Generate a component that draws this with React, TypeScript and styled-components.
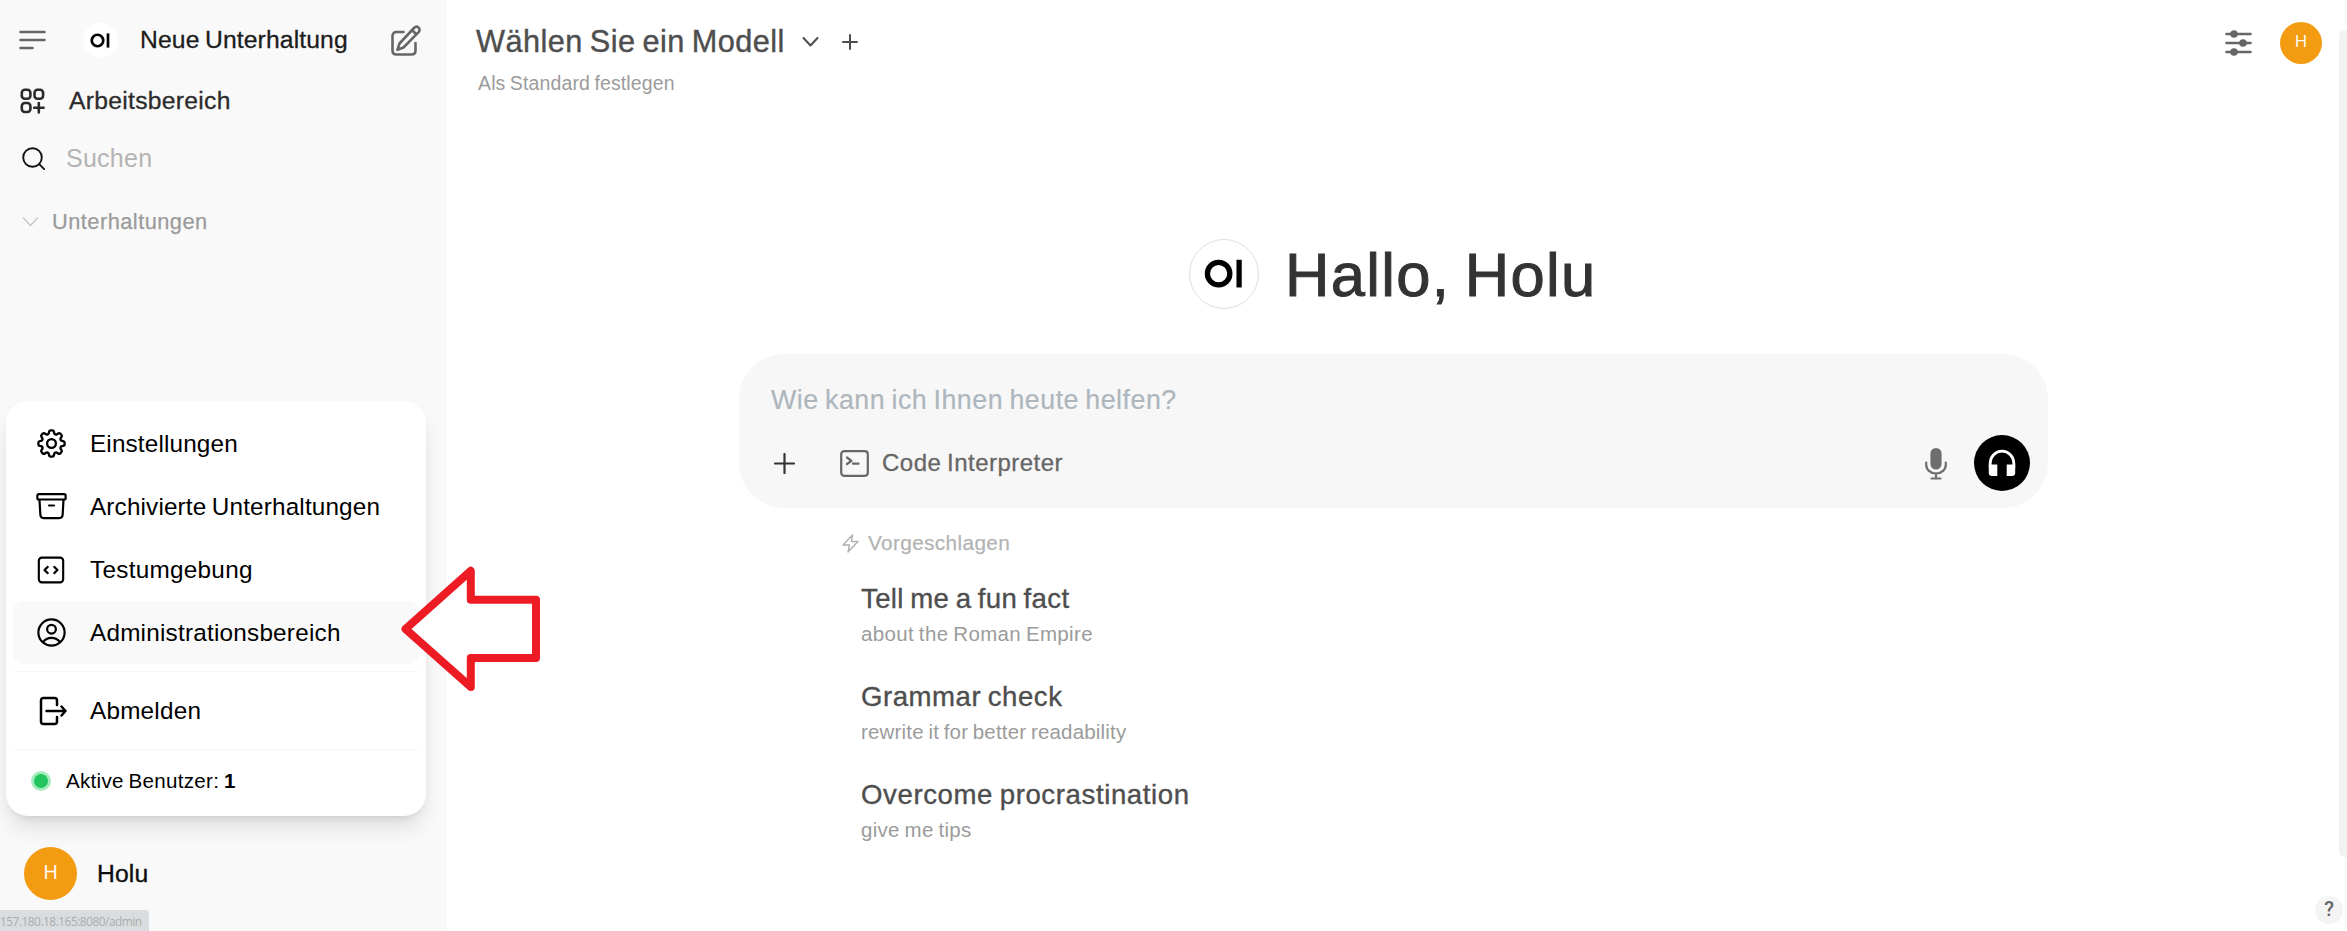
import React from 'react';
import styled, { createGlobalStyle } from 'styled-components';

const Global = createGlobalStyle`
  * { box-sizing: border-box; }
  body { margin: 0; overflow: hidden; background: #fff; font-family: "Liberation Sans", Arial, sans-serif; }
  svg { display: block; flex: none; }
`;

const Label = styled.span<{ $size: number; $ls?: number; $color?: string; $w?: number; $lh?: number }>`
  display: block;
  white-space: nowrap;
  word-spacing: -0.06em;
  font-size: ${p => p.$size}px;
  line-height: ${p => p.$lh ?? 30}px;
  letter-spacing: ${p => p.$ls ?? 0}px;
  color: ${p => p.$color ?? '#0d0d0d'};
  -webkit-text-stroke: ${p => p.$w ?? 0}px currentColor;
`;

const Page = styled.div`
  position: relative;
  display: grid;
  grid-template-columns: 447px 1fr;
  width: 2347px;
  height: 931px;
  overflow: hidden;
`;

const Sidebar = styled.aside`
  position: relative;
  display: flex;
  flex-direction: column;
  background: #f9f9f9;
`;

const TopRow = styled.div`
  display: flex;
  align-items: center;
  height: 60px;
  margin-top: 10px;
  padding: 0 26px 0 19px;
`;

const LogoDot = styled.div<{ $size: number; $ring?: boolean }>`
  display: grid;
  place-items: center;
  flex: none;
  width: ${p => p.$size}px;
  height: ${p => p.$size}px;
  padding-right: ${p => (p.$ring ? 2 : 1)}px;
  border-radius: 50%;
  background: #fff;
  border: ${p => (p.$ring ? '1px solid #dfdfdf' : '0')};
`;

const TopLogo = styled(LogoDot)`
  margin-left: 37px;
  margin-right: 22px;
`;

const PushRight = styled.div`
  margin-left: auto;
`;

const NavRow = styled.div<{ $h: number; $left: number; $gap: number }>`
  display: flex;
  align-items: center;
  height: ${p => p.$h}px;
  padding-left: ${p => p.$left}px;
  gap: ${p => p.$gap}px;
`;

const UserRow = styled.div`
  display: flex;
  align-items: center;
  gap: 20px;
  margin-top: auto;
  margin-bottom: 31px;
  padding-left: 24px;
`;

const Avatar = styled.div<{ $size: number; $font: number }>`
  display: flex;
  justify-content: center;
  width: ${p => p.$size}px;
  height: ${p => p.$size}px;
  line-height: ${p => p.$size - 4}px;
  border-radius: 50%;
  background: #f39c12;
  color: #fff;
  font-family: "Open Sans", sans-serif;
  font-size: ${p => p.$font}px;
`;

const StatusBar = styled.div`
  position: absolute;
  left: 0;
  bottom: 0;
  width: 149px;
  height: 21px;
  border-top-right-radius: 3px;
  background: #dadddf;
  color: #a9acae;
  font: 11.8px/22px "Open Sans", sans-serif;
  letter-spacing: -0.45px;
  white-space: nowrap;
`;

const Menu = styled.div`
  position: absolute;
  left: 6px;
  top: 401px;
  width: 420px;
  height: 415px;
  padding: 11px 7px;
  border-radius: 22px;
  background: #fff;
  box-shadow: 0 14px 22px -4px rgba(0, 0, 0, 0.12), 0 5px 9px -5px rgba(0, 0, 0, 0.12);
`;

const MenuItem = styled.div<{ $active?: boolean }>`
  display: flex;
  align-items: center;
  gap: 21px;
  height: 63px;
  padding-left: 20px;
  border-radius: 11px;
  background: ${p => (p.$active ? '#f9f9f9' : 'transparent')};
`;

const IconSlot = styled.div`
  display: flex;
  justify-content: center;
  width: 36px;
`;

const Rule = styled.div`
  height: 1px;
  margin: 7px 0;
  background: #f7f7f7;
`;

const ActiveUsers = styled.div`
  display: flex;
  align-items: center;
  height: 48px;
  padding-left: 18px;
  gap: 15px;
`;

const Pulse = styled.div`
  width: 20px;
  height: 20px;
  border: 3px solid #a6ebbf;
  border-radius: 50%;
  background: #22c55e;
`;

const Main = styled.main`
  display: flex;
  flex-direction: column;
  position: relative;
`;

const Header = styled.header`
  display: flex;
  justify-content: space-between;
  height: 104px;
  padding: 22px 25px 0 29px;
`;

const ModelRow = styled.div`
  display: flex;
  align-items: center;
  height: 40px;
`;

const HeaderRight = styled.div`
  display: flex;
  align-items: center;
  gap: 28px;
  height: 42px;
`;

const Indent = styled.div<{ $x: number }>`
  padding-left: ${p => p.$x}px;
`;

const Hero = styled.section`
  display: flex;
  align-items: center;
  gap: 26px;
  height: 70px;
  margin: 135px 0 0 742px;
`;

const Composer = styled.section`
  width: 1309px;
  height: 154px;
  margin: 45px 0 0 292px;
  padding: 31px 18px 0 32px;
  border-radius: 45px;
  background: #f7f7f7;
`;

const ToolRow = styled.div`
  display: flex;
  align-items: center;
  height: 56px;
  margin-top: 20px;
  padding-left: 3px;
`;

const ToolEnd = styled.div`
  display: flex;
  align-items: center;
  gap: 27px;
  margin-left: auto;
`;

const CallButton = styled.div`
  display: grid;
  place-items: center;
  width: 56px;
  height: 56px;
  border-radius: 50%;
  background: #000;
`;

const Suggestions = styled.section`
  padding: 20px 0 0 395px;
`;

const SuggestHead = styled.div`
  display: flex;
  align-items: center;
  gap: 9px;
  height: 30px;
`;

const Prompt = styled.div`
  height: 98px;
  padding-left: 19px;
`;

const PromptList = styled.div`
  padding-top: 22px;
`;

const Scrollbar = styled.div`
  position: absolute;
  right: 0;
  top: 30px;
  width: 8px;
  height: 827px;
  border-radius: 6px 0 0 6px;
  background: #f2f2f2;
`;

const Help = styled.div`
  position: absolute;
  right: 4px;
  bottom: 7px;
  width: 28px;
  height: 28px;
  border-radius: 50%;
  background: #f4f4f4;
  color: #666;
  font: 500 20px/27px Roboto, sans-serif;
  text-align: center;
`;

const Pointer = styled.svg`
  position: absolute;
  left: 370px;
  top: 560px;
`;

const Logo = ({ w }: { w: number }) => (
  <svg width={w} height={w * 0.75} viewBox="0 0 40 30" fill="none">
    <circle cx="15" cy="15" r="11.5" stroke="#000" strokeWidth="5.4" />
    <path d="M36 .8v28.4" stroke="#000" strokeWidth="5.4" />
  </svg>
);

const Icon = ({ w, h, sw = 1.5, color = '#000', box = '0 0 24 24', children }: {
  w: number; h: number; sw?: number; color?: string; box?: string; children: React.ReactNode;
}) => (
  <svg width={w} height={h} viewBox={box} fill="none" stroke={color}
    strokeWidth={sw} strokeLinecap="round" strokeLinejoin="round">{children}</svg>
);

const GearIcon = () => (
  <Icon w={35} h={35} sw={1.6}>
    <path d="M10.343 3.94c.09-.542.56-.94 1.11-.94h1.093c.55 0 1.02.398 1.11.94l.149.894c.07.424.384.764.78.93.398.164.855.142 1.205-.108l.737-.527a1.125 1.125 0 0 1 1.45.12l.773.774c.39.389.44 1.002.12 1.45l-.527.737c-.25.35-.272.806-.107 1.204.165.397.505.71.93.78l.893.15c.543.09.94.56.94 1.109v1.094c0 .55-.397 1.02-.94 1.11l-.893.149c-.425.07-.765.383-.93.78-.165.398-.143.854.107 1.204l.527.738c.32.447.269 1.06-.12 1.45l-.774.773a1.125 1.125 0 0 1-1.449.12l-.738-.527c-.35-.25-.806-.272-1.203-.107-.397.165-.71.505-.781.929l-.149.894c-.09.542-.56.94-1.11.94h-1.094c-.55 0-1.019-.398-1.11-.94l-.148-.894c-.071-.424-.384-.764-.781-.93-.398-.164-.854-.142-1.204.108l-.738.527c-.447.32-1.06.269-1.45-.12l-.773-.774a1.125 1.125 0 0 1-.12-1.45l.527-.737c.25-.35.273-.806.108-1.204-.165-.397-.505-.71-.93-.78l-.894-.15c-.542-.09-.94-.56-.94-1.109v-1.094c0-.55.398-1.02.94-1.11l.894-.149c.424-.07.765-.383.93-.78.165-.398.143-.854-.107-1.204l-.527-.738a1.125 1.125 0 0 1 .12-1.45l.773-.773a1.125 1.125 0 0 1 1.45-.12l.737.527c.35.25.807.272 1.204.107.397-.165.71-.505.78-.929l.15-.894Z" />
    <circle cx="12" cy="12" r="3" />
  </Icon>
);

const ArchiveIcon = () => (
  <Icon w={35} h={35}>
    <path d="m20.25 7.2-.625 10.632a2.25 2.25 0 0 1-2.247 2.118H6.622a2.25 2.25 0 0 1-2.247-2.118L3.75 7.2M10.3 11.3h3.4M3.4 7.2h17.2c.6 0 1.1-.5 1.1-1.1V4.6c0-.6-.5-1.1-1.1-1.1H3.4c-.6 0-1.1.5-1.1 1.1v1.5c0 .6.5 1.1 1.1 1.1Z" />
  </Icon>
);

const CodeIcon = () => (
  <Icon w={34} h={34}>
    <path d="M14.3 9.8 16.6 12l-2.3 2.2M9.7 14.2 7.4 12l2.3-2.2" />
    <rect x="3.4" y="3.3" width="17.2" height="17.4" rx="2.2" />
  </Icon>
);

const UserIcon = () => (
  <Icon w={35} h={35}>
    <path d="M17.98 18.72a7.49 7.49 0 0 0-5.98-2.97 7.49 7.49 0 0 0-5.98 2.97m11.96 0a9 9 0 1 0-11.96 0m11.96 0A8.97 8.97 0 0 1 12 21a8.97 8.97 0 0 1-5.98-2.28" />
    <circle cx="12" cy="9.75" r="3" />
  </Icon>
);

const ExitIcon = () => (
  <Icon w={34} h={34} box="0 0 32 34" sw={2.5}>
    <path d="M22 11V6.5C22 4.9 21 4 19.5 4H8.500C6.900 4 6 5 6 6.500v21C6 29 6.900 30 8.500 30h11c1.500 0 2.500-1 2.500-2.500V23M11.500 17h19M26.500 12.500l4 4.500-4 4.500" />
  </Icon>
);

const menu = [
  { text: 'Einstellungen', icon: <GearIcon />, ls: 0.15 },
  { text: 'Archivierte Unterhaltungen', icon: <ArchiveIcon />, ls: 0.15 },
  { text: 'Testumgebung', icon: <CodeIcon />, ls: 0.28 },
  { text: 'Administrationsbereich', icon: <UserIcon />, ls: 0.22 },
];

const prompts = [
  { title: 'Tell me a fun fact', sub: 'about the Roman Empire', a: 0.36, b: 0.35 },
  { title: 'Grammar check', sub: 'rewrite it for better readability', a: 0.53, b: 0.18 },
  { title: 'Overcome procrastination', sub: 'give me tips', a: 0.6, b: 0.3 },
];

export default function App() {
  return (
    <Page>
      <Global />
      <Sidebar>
        <TopRow>
          <Icon w={27} h={20} box="0 0 27 20" sw={2.6} color="#666">
            <path d="M1.500 2h24M1.500 10h24M1.500 18h12" />
          </Icon>
          <TopLogo $size={35}><Logo w={20} /></TopLogo>
          <Label $size={24.7} $ls={0.12} $w={0.3} $lh={32} $color="#1c1c1c">Neue Unterhaltung</Label>
          <PushRight>
            <Icon w={30} h={31} box="0 0 30 31" sw={2.6} color="#666">
              <path d="M12.500 7H5.500C3 7 1.500 8.500 1.500 11v14.500c0 2.500 1.500 4 4 4h15c2.500 0 4-1.500 4-4V18" />
              <path d="M8.500 18.500 23 3c1.500-1.600 3.400-1.500 4.600-.4 1.300 1.200 1.300 3.200 0 4.600L12.500 22.500l-6 2.200zM21.500 5.500l3.500 3.500" />
            </Icon>
          </PushRight>
        </TopRow>
        <NavRow $h={61} $left={20} $gap={24}>
          <Icon w={25} h={26} box="0 0 25 26" sw={2.6} color="#2b2b2b">
            <rect x="1.800" y="1.800" width="8.600" height="9" rx="3" />
            <rect x="14.500" y="1.800" width="8.600" height="9" rx="3" />
            <rect x="1.800" y="15" width="8.600" height="9" rx="3" />
            <path d="M18.800 15v9.500M14.200 19.700h9.400" />
          </Icon>
          <Label $size={24.7} $ls={0.28} $w={0.3} $color="#2b2b2b">Arbeitsbereich</Label>
        </NavRow>
        <NavRow $h={54} $left={22} $gap={21}>
          <Icon w={23} h={23} box="0 0 23 23" sw={1.9} color="#111">
            <circle cx="10.500" cy="10.500" r="9.300" /><path d="m17.200 17.200 5 5" />
          </Icon>
          <Label $size={25} $ls={0.25} $color="#b4b4b4">Suchen</Label>
        </NavRow>
        <NavRow $h={73} $left={22} $gap={13}>
          <Icon w={17} h={10} box="0 0 17 10" sw={1.6} color="#c9c9c9"><path d="m1.500 1 7 7.500 7-7.500" /></Icon>
          <Label $size={21.8} $ls={0.47} $w={0.25} $color="#9b9b9b">Unterhaltungen</Label>
        </NavRow>
        <UserRow>
          <Avatar $size={53} $font={20}>H</Avatar>
          <Label $size={24.7} $ls={0.15} $w={0.35}>Holu</Label>
        </UserRow>
        <StatusBar>157.180.18.165:8080/admin</StatusBar>
      </Sidebar>

      <Main>
        <Header>
          <div>
            <ModelRow>
              <Label $size={30.7} $ls={0.43} $w={0.4} $lh={32} $color="#4e4e4e">Wählen Sie ein Modell</Label>
              <Indent $x={17}>
                <Icon w={17} h={10} box="0 0 17 10" sw={2} color="#4e4e4e"><path d="m1.500 1 7 7.500 7-7.500" /></Icon>
              </Indent>
              <Indent $x={23}>
                <Icon w={16} h={16} box="0 0 16 16" sw={2} color="#4e4e4e"><path d="M8 1v14M1 8h14" /></Icon>
              </Indent>
            </ModelRow>
            <Indent $x={2}><Label $size={19.5} $ls={0.13} $color="#9b9b9b" $lh={42}>Als Standard festlegen</Label></Indent>
          </div>
          <HeaderRight>
            <Icon w={27} h={26} box="0 0 27 26" sw={2.6} color="#666">
              <path d="M1.500 4h24M1.500 13h24M1.500 22h24" />
              <circle cx="9" cy="4" r="2.500" fill="#666" /><circle cx="18" cy="13" r="2.500" fill="#666" /><circle cx="9" cy="22" r="2.500" fill="#666" />
            </Icon>
            <Avatar $size={42} $font={17}>H</Avatar>
          </HeaderRight>
        </Header>

        <Hero>
          <LogoDot $size={70} $ring><Logo w={39} /></LogoDot>
          <Label $size={61.5} $ls={1.3} $w={1} $lh={69} $color="#333">Hallo, Holu</Label>
        </Hero>

        <Composer>
          <Label $size={26.8} $ls={0.5} $color="#aeb6bd" $w={0.2}>Wie kann ich Ihnen heute helfen?</Label>
          <ToolRow>
            <Icon w={21} h={21} box="0 0 21 21" sw={2.2} color="#333"><path d="M10.500 1v19M1 10.500h19" /></Icon>
            <Indent $x={45}>
              <Icon w={29} h={27} box="0 0 29 27" sw={2.2} color="#666">
                <rect x="1.200" y="1.200" width="26.600" height="24.600" rx="3" />
                <path d="m7 7.500 4.500 3.300L7 14M13 13.700h5.500" />
              </Icon>
            </Indent>
            <Indent $x={13}><Label $size={24} $ls={0.48} $w={0.3} $lh={32} $color="#666">Code Interpreter</Label></Indent>
            <ToolEnd>
              <Icon w={22} h={33} box="0 0 22 33" sw={2.2} color="#6e6e6e">
                <rect x="6.500" y="2" width="9" height="19.500" rx="4.500" fill="#6e6e6e" />
                <path d="M1.200 15.500v2c0 5 4 9 9.800 9s9.800-4 9.800-9v-2M11 27v4.500M6.500 31.500h9" />
              </Icon>
              <CallButton>
                <svg width="28" height="28" viewBox="0 0 28 28">
                  <path d="M2.200 19v-5a11.800 11.800 0 0 1 23.600 0v5" fill="none" stroke="#fff" strokeWidth="2.800" />
                  <path d="M.8 15.500h8.500V27H4C2 27 .8 25.800.8 24zM27.200 15.500h-8.500V27H24c2 0 3.200-1.200 3.200-3z" fill="#fff" />
                </svg>
              </CallButton>
            </ToolEnd>
          </ToolRow>
        </Composer>

        <Suggestions>
          <SuggestHead>
            <Icon w={17} h={19} box="0 0 17 19" sw={1.4} color="#b0b0b0"><path d="M10.500 1 1 11h6.500l-1.500 7 10-10.500H9.300z" /></Icon>
            <Label $size={20.8} $ls={0.35} $w={0.25} $color="#b4b4b4">Vorgeschlagen</Label>
          </SuggestHead>
          <PromptList>
            {prompts.map(p => (
              <Prompt key={p.title}>
                <Label $size={27.6} $ls={p.a} $w={0.35} $lh={38} $color="#4e4e4e">{p.title}</Label>
                <Label $size={20.5} $ls={p.b} $lh={32} $color="#9b9b9b">{p.sub}</Label>
              </Prompt>
            ))}
          </PromptList>
        </Suggestions>
        <Scrollbar />
        <Help>?</Help>
      </Main>

      <Menu>
        {menu.map((m, i) => (
          <MenuItem key={m.text} $active={i === 3}>
            <IconSlot>{m.icon}</IconSlot>
            <Label $size={24.3} $ls={m.ls} $color="#000">{m.text}</Label>
          </MenuItem>
        ))}
        <Rule />
        <MenuItem>
          <IconSlot><ExitIcon /></IconSlot>
          <Label $size={24.3} $ls={0.22} $color="#000">Abmelden</Label>
        </MenuItem>
        <Rule />
        <ActiveUsers>
          <Pulse />
          <Label $size={20.6} $ls={0.28} $color="#000">Aktive Benutzer: <b>1</b></Label>
        </ActiveUsers>
      </Menu>

      <Pointer width="180" height="140" viewBox="370 560 180 140">
        <path d="M405.500 629 470.800 570.800V599.800H536V658H470.800V687Z" fill="#fff" stroke="#ed1c24" strokeWidth="8" strokeLinejoin="round" />
      </Pointer>
    </Page>
  );
}
